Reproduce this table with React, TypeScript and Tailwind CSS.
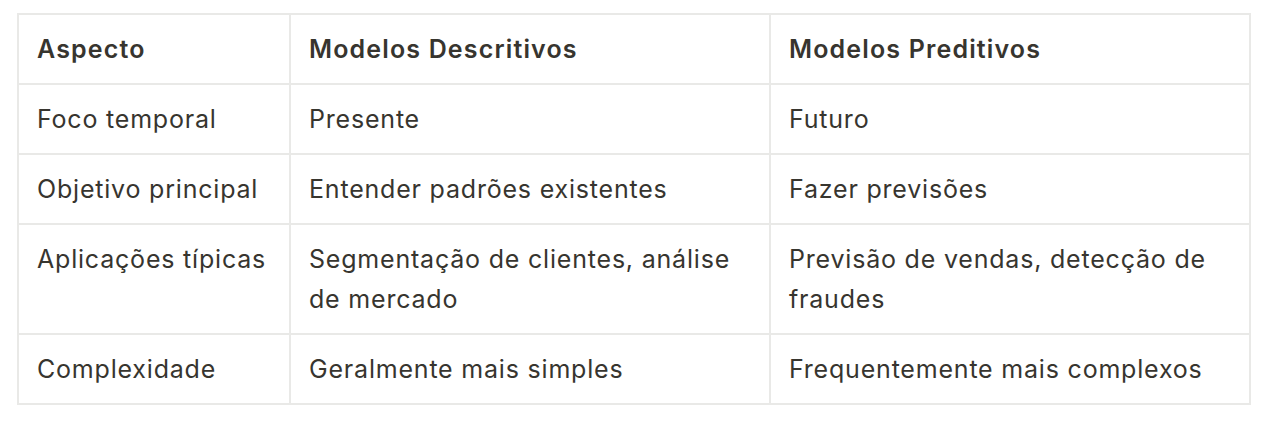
import React from "react";

const rows: [string, string, string][] = [
  ["Foco temporal", "Presente", "Futuro"],
  ["Objetivo principal", "Entender padrões existentes", "Fazer previsões"],
  ["Aplicações típicas", "Segmentação de clientes, análise de mercado", "Previsão de vendas, detecção de fraudes"],
  ["Complexidade", "Geralmente mais simples", "Frequentemente mais complexos"],
];

export default function App() {
  return (
    <div
      className="w-[1276px] h-[422px] bg-white pl-[17px] pt-[13px] text-[#37352f]"
      style={{ fontFamily: "Inter, 'Noto Sans', sans-serif" }}
    >
      <table className="border-collapse table-fixed w-[1232px] text-[25px] leading-[40px]">
        <colgroup>
          <col className="w-[272px]" />
          <col className="w-[480px]" />
          <col className="w-[480px]" />
        </colgroup>
        <thead>
          <tr>
            {["Aspecto", "Modelos Descritivos", "Modelos Preditivos"].map((h) => (
              <th
                key={h}
                className="border-2 border-[#e9e9e7] pl-[18px] pr-[12px] py-[14px] text-left align-top font-semibold tracking-[1.15px]"
              >
                {h}
              </th>
            ))}
          </tr>
        </thead>
        <tbody>
          {rows.map((r) => (
            <tr key={r[0]}>
              {r.map((c, i) => (
                <td
                  key={i}
                  className="border-2 border-[#e9e9e7] pl-[18px] pr-[12px] py-[14px] align-top font-normal tracking-[0.8px]"
                >
                  {c}
                </td>
              ))}
            </tr>
          ))}
        </tbody>
      </table>
    </div>
  );
}
